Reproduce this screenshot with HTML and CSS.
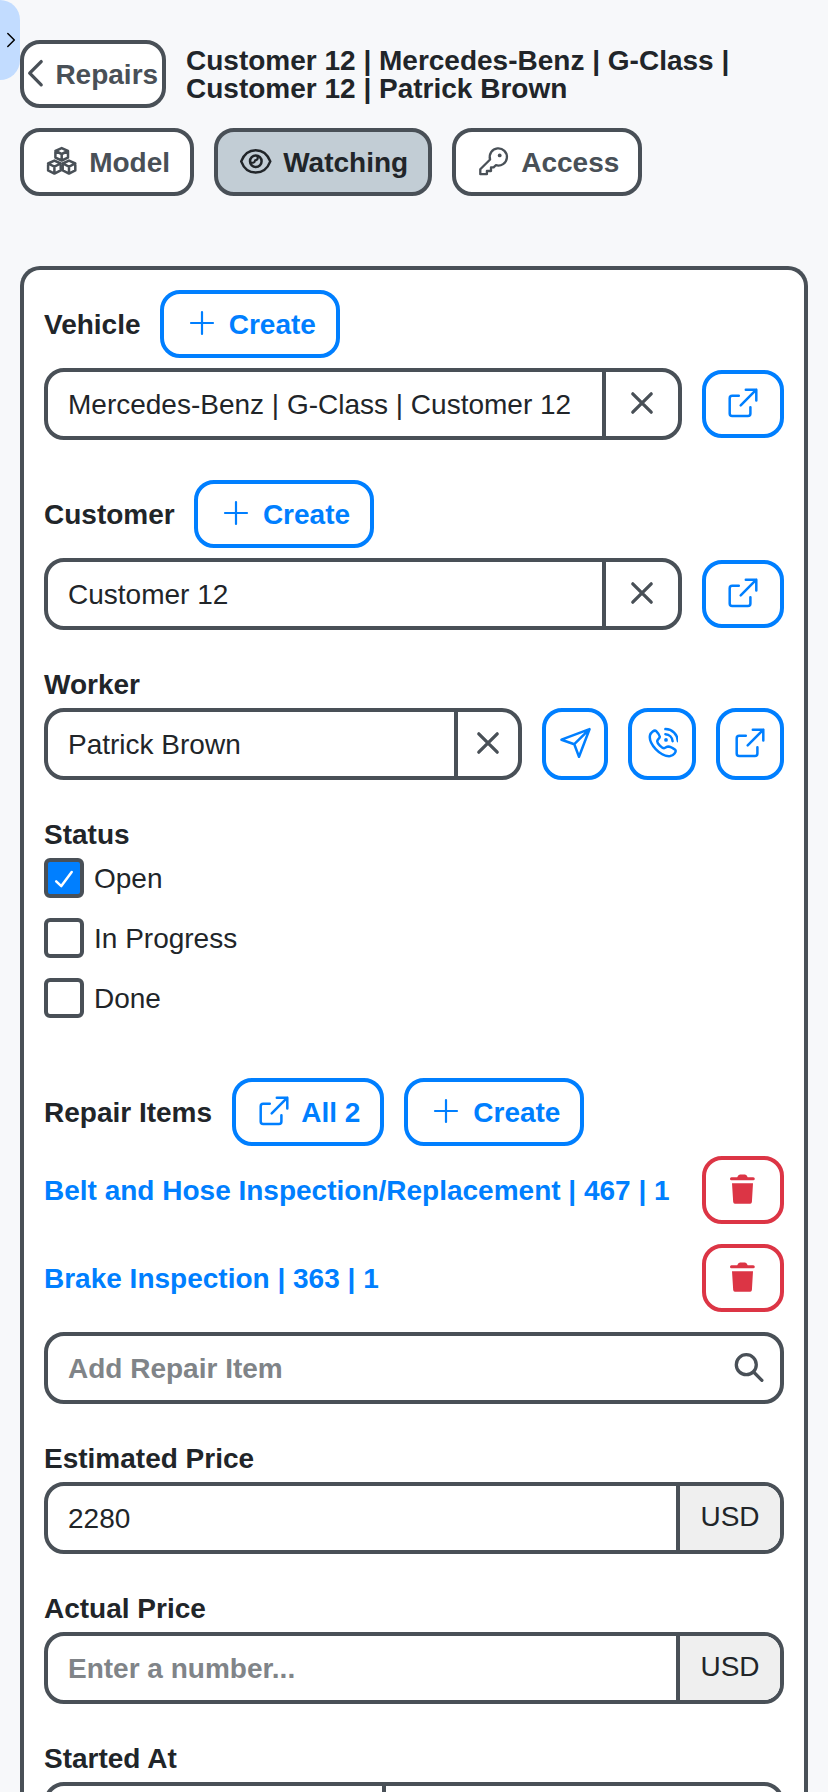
FILE: index.html
```html
<!DOCTYPE html>
<html lang="en">
<head>
<meta charset="utf-8">
<title>Repair</title>
<link rel="stylesheet" href="styles.css">
</head>
<body>
<svg class="defs" width="0" height="0">
  <symbol id="plus" viewBox="0 0 32 32"><path d="M16 5v22M5 16h22" stroke-width="2.200"/></symbol>
  <symbol id="close" viewBox="0 0 32 32"><path d="M6.800 6.800l18.400 18.400M25.200 6.800L6.800 25.200" stroke-width="3.300"/></symbol>
  <symbol id="open" viewBox="0 0 32 32"><path d="M11.800 8.800H5.200q-2.500 0-2.500 2.500V26.600q0 2.500 2.500 2.500H20.900q2.500 0 2.500-2.500V20.200M18.800 2.700H29.300V13.400M29.300 2.700L13.700 18.300" stroke-width="2.500"/></symbol>
  <symbol id="boxes" viewBox="0 0 32 32"><g stroke-width="2.500">
    <path d="M15.700 3.100l6.300 2.900v6.600l-6.300 2.900-6.300-2.900V6zM9.400 6l6.300 3 6.300-3M15.700 9v6.500"/>
    <path d="M8.400 15.600l6.300 2.900v6.900l-6.300 3.200-6.300-3.200v-6.900zM2.100 18.500l6.300 3.200 6.300-3.200M8.400 21.700v6.900"/>
    <path d="M23 15.600l6.300 2.900v6.900L23 28.600l-6.300-3.200v-6.900zM16.700 18.500l6.300 3.200 6.300-3.200M23 21.700v6.900"/></g></symbol>
  <symbol id="eye" viewBox="0 0 32 32"><path d="M1.200 16.400C4 9 9.500 5.200 15.700 5.200S27.400 9 30.300 16.400C27.400 24 21.900 27.600 15.700 27.600S4 24 1.200 16.400z" stroke-width="2.500"/><circle cx="15.800" cy="16.300" r="5.800" stroke-width="2.500"/><path d="M17.300 11.500c1.200 2-.2 3.700-2.200 3.900-.3 2.300-2.300 2.900-4.300 2" stroke-width="2.100"/></symbol>
  <symbol id="key" viewBox="0 0 32 32"><path d="M12.100 14.500L2.300 24.300V29.200H8.900V26H13V22.400H15.600L17.800 20.200A8.600 8.600 0 1 0 12.100 14.500z" stroke-width="2.300"/><circle class="solid" cx="21.700" cy="10.400" r="1.900"/></symbol>
  <symbol id="send" viewBox="0 0 32 32"><path d="M30.500 2.200L2.500 12.700 15.300 17.200 20 29.800zM15.300 17.200L30.500 2.200" stroke-width="2.500"/></symbol>
  <symbol id="phone" viewBox="0 0 32 32"><path d="M10.200 4.200C12 6 13.500 8.500 13.800 9.800 13.800 11.500 11.200 12.500 11.200 14.300 11.200 16.600 16 21.200 18 21.200 19.600 21.200 20.600 19.300 22.300 19.400 24.500 19.600 27.500 21.500 29.200 22.700 30.800 24.700 27.500 28.500 24.200 29.100 19.500 29.700 13.500 26.300 9.700 22.200 5.800 18 3.100 12.500 4 8.300 4.800 5.300 8.400 2.400 10.200 4.200zM19.400 7.300c4 .2 6.800 3 7.200 6.900M19.400 2.100c7 .2 12 5.200 12.500 12.100" stroke-width="2.500"/><circle class="solid" cx="20" cy="12.900" r="1.900"/></symbol>
  <symbol id="trash" viewBox="0 0 32 32"><path class="solid" d="M4.400 4.300H10.200Q11.300 1.400 13 1.400H18Q19.700 1.400 20.700 4.300H26.200Q27.800 4.300 27.800 5.800T26.200 7.300H4.400Q3 7.300 3 5.800T4.400 4.300zM5 10.300H26L24.900 29Q24.700 30.700 23.200 30.700H7.900Q6.400 30.700 6.200 29z"/></symbol>
  <symbol id="search" viewBox="0 0 32 32"><circle cx="13.300" cy="13.700" r="10" stroke-width="3.300"/><path d="M20.600 21l8.300 8.300" stroke-width="3.300"/></symbol>
  <symbol id="back" viewBox="0 0 20 32"><path d="M16.200 4.600L4.700 16.200l11.500 11.600" stroke-width="3.300"/></symbol>
</svg>

<button class="drawer-toggle"><svg class="drawer-icon" viewBox="0 0 10 16"><path d="M1.800 1.500L8.300 8l-6.500 6.500" stroke-width="1.500"/></svg></button>

<header class="header">
  <div class="header-row">
    <button class="btn btn-back"><svg class="icon"><use href="#back"/></svg>Repairs</button>
    <h1 class="title">Customer 12 | Mercedes-Benz | G-Class |<br>Customer 12 | Patrick Brown</h1>
  </div>
  <div class="header-row">
    <button class="btn btn-model"><svg class="icon"><use href="#boxes"/></svg>Model</button>
    <button class="btn btn-watching"><svg class="icon"><use href="#eye"/></svg>Watching</button>
    <button class="btn btn-access"><svg class="icon"><use href="#key"/></svg>Access</button>
  </div>
</header>

<main class="card">
  <section class="field">
    <div class="field-head field-head-tight">Vehicle <button class="btn btn-primary btn-create"><svg class="icon"><use href="#plus"/></svg>Create</button></div>
    <div class="field-row">
      <div class="input"><span class="value">Mercedes-Benz | G-Class | Customer 12</span><button class="clear"><svg class="icon"><use href="#close"/></svg></button></div>
      <button class="btn btn-primary btn-icon"><svg class="icon"><use href="#open"/></svg></button>
    </div>
  </section>

  <section class="field">
    <div class="field-head field-head-tight">Customer <button class="btn btn-primary btn-create"><svg class="icon"><use href="#plus"/></svg>Create</button></div>
    <div class="field-row">
      <div class="input"><span class="value">Customer 12</span><button class="clear"><svg class="icon"><use href="#close"/></svg></button></div>
      <button class="btn btn-primary btn-icon"><svg class="icon"><use href="#open"/></svg></button>
    </div>
  </section>

  <section class="field">
    <div class="field-head field-head-plain">Worker</div>
    <div class="field-row">
      <div class="input"><span class="value">Patrick Brown</span><button class="clear clear-narrow"><svg class="icon"><use href="#close"/></svg></button></div>
      <button class="btn btn-primary btn-square btn-send"><svg class="icon"><use href="#send"/></svg></button>
      <button class="btn btn-primary btn-square"><svg class="icon"><use href="#phone"/></svg></button>
      <button class="btn btn-primary btn-square"><svg class="icon"><use href="#open"/></svg></button>
    </div>
  </section>

  <section class="field">
    <div class="field-head field-head-plain">Status</div>
    <div class="options">
      <label class="option"><span class="box box-checked"><svg class="check" viewBox="0 0 32 32"><path d="M8.200 19.300l5.100 4.800L23.700 10.100" stroke-width="2.500"/></svg></span>Open</label>
      <label class="option"><span class="box"></span>In Progress</label>
      <label class="option"><span class="box"></span>Done</label>
    </div>
  </section>

  <section class="field">
    <div class="field-head">Repair Items
      <button class="btn btn-primary btn-all"><svg class="icon"><use href="#open"/></svg>All 2</button>
      <button class="btn btn-primary btn-create"><svg class="icon"><use href="#plus"/></svg>Create</button>
    </div>
    <div class="items">
      <div class="item"><a class="link">Belt and Hose Inspection/Replacement | 467 | 1</a><button class="btn btn-danger btn-icon"><svg class="icon"><use href="#trash"/></svg></button></div>
      <div class="item"><a class="link">Brake Inspection | 363 | 1</a><button class="btn btn-danger btn-icon"><svg class="icon"><use href="#trash"/></svg></button></div>
      <div class="input"><span class="value placeholder">Add Repair Item</span><svg class="icon icon-search"><use href="#search"/></svg></div>
    </div>
  </section>

  <section class="field">
    <div class="field-head field-head-plain">Estimated Price</div>
    <div class="input"><span class="value">2280</span><span class="unit">USD</span></div>
  </section>

  <section class="field">
    <div class="field-head field-head-plain">Actual Price</div>
    <div class="input"><span class="value placeholder">Enter a number...</span><span class="unit">USD</span></div>
  </section>

  <section class="field">
    <div class="field-head field-head-plain">Started At</div>
    <div class="input"><span class="value date"></span><span class="value time"></span></div>
  </section>
</main>
</body>
</html>
```
FILE: styles.css
```css
* { box-sizing: border-box; }

html { height: 100%; overflow: hidden; }

body {
  --line: #495057;
  --ink: #212529;
  --blue: #007fff;
  --red: #dc3545;
  height: 1792px;
  margin: 0;
  padding: 40px 20px 0;
  overflow: hidden;
  background: #f7f8fa;
  color: var(--ink);
  font: 28px/29px "Liberation Sans", Arial, sans-serif;
}

button { margin: 0; padding: 0; border: 0; background: none; font: inherit; color: inherit; }

svg { fill: none; stroke: currentColor; stroke-linecap: round; stroke-linejoin: round; }
.solid { fill: currentColor; stroke: none; }
.defs { position: absolute; }

.icon { flex: none; width: 32px; height: 32px; margin: -2px 2px 0; overflow: visible; }

.drawer-toggle {
  position: absolute;
  left: 0;
  top: 0;
  display: flex;
  align-items: center;
  justify-content: flex-end;
  width: 20px;
  height: 80px;
  padding-right: 4px;
  border-radius: 0 20px 20px 0;
  background: #c2dcff;
  color: #000;
}
.drawer-icon { width: 10px; height: 16px; }

.header { display: flex; flex-direction: column; gap: 20px; margin-bottom: 70px; }
.header-row { display: flex; align-items: center; gap: 20px; }
.title { margin: 0; padding-top: 2px; font-size: 28px; line-height: 28px; }

.btn {
  display: flex;
  flex: none;
  align-items: center;
  gap: 9.2px;
  height: 68px;
  padding: 0 0 0 20px;
  border: 4px solid var(--line);
  border-radius: 20px;
  background: #fff;
  color: var(--line);
  font-weight: bold;
}
.btn-back { width: 146px; padding-left: 1px; gap: 10.4px; }
.btn-back .icon { width: 20px; margin: -2px 0 0; }
.btn-model { width: 174px; }
.btn-watching { width: 218px; background: #c2cdd5; color: var(--ink); }
.btn-access { width: 190px; }
.btn-primary { border-color: var(--blue); color: var(--blue); }
.btn-danger { border-color: var(--red); color: var(--red); }
.btn-create { width: 180px; }
.btn-all { width: 152px; }
.btn-icon { width: 82px; padding: 0; justify-content: center; }
.btn-square { width: 68px; height: 72px; padding: 0; justify-content: center; }
.btn-send { width: 66px; }

.card {
  display: flex;
  flex-direction: column;
  gap: 40px;
  height: 1526px;
  padding: 20px 20px 0;
  border: 4px solid var(--line);
  border-bottom: 0;
  border-radius: 20px 20px 0 0;
  background: #fff;
  overflow: hidden;
}

.field { display: flex; flex: none; flex-direction: column; gap: 10px; }
.field-head { display: flex; align-items: center; gap: 20px; font-weight: bold; }
.field-head-tight { gap: 19px; }
.field-head-plain { align-items: flex-start; height: 28px; }
.field-row { display: flex; align-items: center; gap: 20px; }

.input {
  display: flex;
  flex: 1 0 auto;
  align-items: center;
  height: 72px;
  border: 4px solid var(--line);
  border-radius: 20px;
  background: #fff;
  overflow: hidden;
}
.value { flex: 1; padding: 0 20px; white-space: nowrap; }
.placeholder { color: #808488; font-weight: bold; }
.clear {
  display: flex;
  align-items: center;
  align-self: stretch;
  justify-content: center;
  width: 76px;
  border-left: 4px solid var(--line);
  color: var(--line);
}
.clear-narrow { width: 64px; }
.icon-search { margin-right: 15px; color: var(--line); }
.unit {
  display: flex;
  align-items: center;
  align-self: stretch;
  justify-content: center;
  width: 104px;
  padding-bottom: 4px;
  border-left: 4px solid var(--line);
  background: #efefef;
}

.options { display: flex; flex-direction: column; gap: 20px; padding-bottom: 20px; }
.option { display: flex; align-items: center; gap: 10px; }
.box { width: 40px; height: 40px; border: 4px solid var(--line); border-radius: 6px; }
.box-checked { background: var(--blue); color: #fff; }
.check { display: block; width: 32px; height: 32px; }

.items { display: flex; flex-direction: column; gap: 20px; }
.item { display: flex; align-items: center; justify-content: space-between; }
.link { color: var(--blue); font-weight: bold; white-space: nowrap; }

.date, .time { align-self: stretch; padding: 0; }
.date { flex: 0 0 334px; }
.time { border-left: 4px solid var(--line); }
```
